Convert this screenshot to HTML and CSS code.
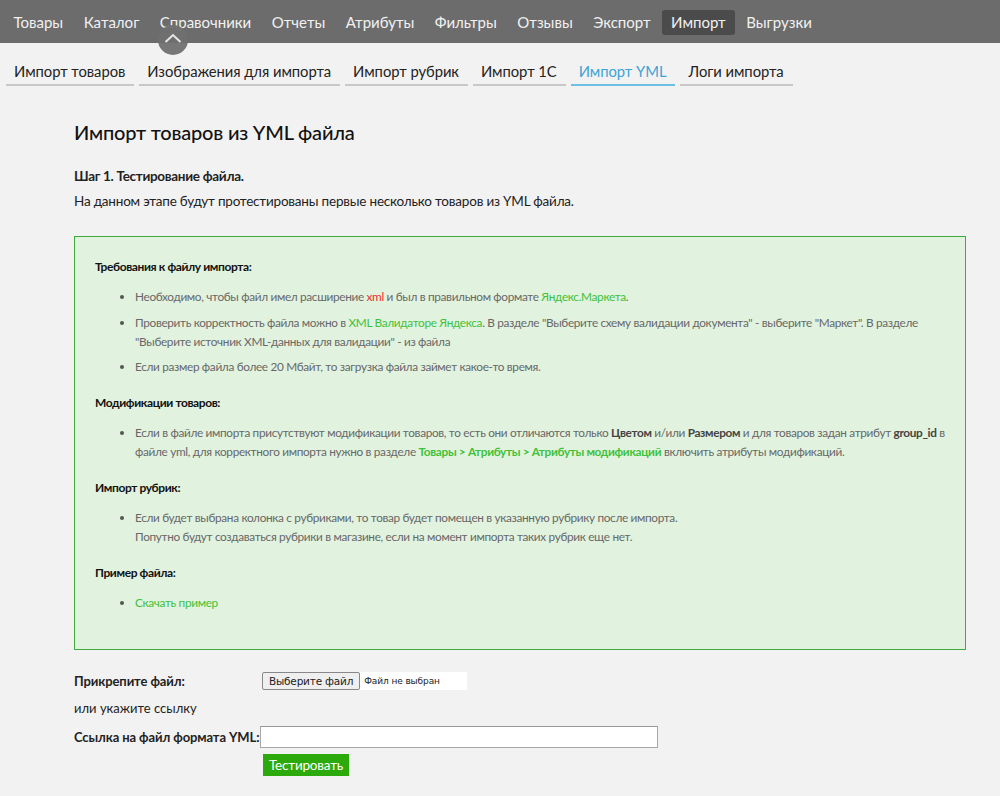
FILE: index.html
```html
<!DOCTYPE html>
<html lang="ru">
<head>
<meta charset="utf-8">
<title>Импорт YML</title>
<link rel="stylesheet" href="styles.css">
</head>
<body>
<header class="topnav">
  <nav class="menu">
    <a class="menu-item">Товары</a>
    <a class="menu-item">Каталог</a>
    <a class="menu-item">Справочники</a>
    <a class="menu-item">Отчеты</a>
    <a class="menu-item">Атрибуты</a>
    <a class="menu-item">Фильтры</a>
    <a class="menu-item">Отзывы</a>
    <a class="menu-item">Экспорт</a>
    <a class="menu-item active">Импорт</a>
    <a class="menu-item">Выгрузки</a>
  </nav>
  <span class="collapse-btn"><svg width="18" height="10" viewBox="0 0 18 10"><path d="M1.5 9 L9 2 L16.5 9" fill="none" stroke="#e6e6e6" stroke-width="2"/></svg></span>
</header>
<div class="tabs">
  <a class="tab">Импорт товаров</a>
  <a class="tab">Изображения для импорта</a>
  <a class="tab">Импорт рубрик</a>
  <a class="tab">Импорт 1С</a>
  <a class="tab active">Импорт YML</a>
  <a class="tab">Логи импорта</a>
</div>
<main class="content">
  <h1 class="title">Импорт товаров из YML файла</h1>
  <h3 class="step">Шаг 1. Тестирование файла.</h3>
  <p class="lead">На данном этапе будут протестированы первые несколько товаров из YML файла.</p>
  <section class="info">
    <h4 class="info-head">Требования к файлу импорта:</h4>
    <ul class="info-list">
      <li>Необходимо, чтобы файл имел расширение <span class="red">xml</span> и был в правильном формате <a class="link">Яндекс.Маркета</a>.</li>
      <li>Проверить корректность файла можно в <a class="link">XML Валидаторе Яндекса</a>. В разделе "Выберите схему валидации документа" - выберите "Маркет". В разделе "Выберите источник XML-данных для валидации" - из файла</li>
      <li>Если размер файла более 20 Мбайт, то загрузка файла займет какое-то время.</li>
    </ul>
    <h4 class="info-head">Модификации товаров:</h4>
    <ul class="info-list">
      <li>Если в файле импорта присутствуют модификации товаров, то есть они отличаются только <b>Цветом</b> и/или <b>Размером</b> и для товаров задан атрибут <b>group_id</b> в файле yml, для корректного импорта нужно в разделе <a class="link bold">Товары &gt; Атрибуты &gt; Атрибуты модификаций</a> включить атрибуты модификаций.</li>
    </ul>
    <h4 class="info-head">Импорт рубрик:</h4>
    <ul class="info-list">
      <li>Если будет выбрана колонка с рубриками, то товар будет помещен в указанную рубрику после импорта.<br>Попутно будут создаваться рубрики в магазине, если на момент импорта таких рубрик еще нет.</li>
    </ul>
    <h4 class="info-head">Пример файла:</h4>
    <ul class="info-list">
      <li><a class="link">Скачать пример</a></li>
    </ul>
  </section>
  <form class="form">
    <div class="row">
      <label class="label">Прикрепите файл:</label>
      <span class="file"><span class="file-btn">Выберите файл</span><span class="file-name">Файл не выбран</span></span>
    </div>
    <div class="or">или укажите ссылку</div>
    <div class="row row-url">
      <label class="label label-url">Ссылка на файл формата YML:</label>
      <input class="url" type="text">
    </div>
    <div class="row-btn">
      <button class="submit" type="button">Тестировать</button>
    </div>
  </form>
</main>
</body>
</html>
```
FILE: styles.css
```css
* { box-sizing: border-box; }
html, body { margin: 0; padding: 0; }
body {
  background: #f3f2f2;
  font-family: Lato, "Noto Sans", sans-serif;
  color: #222;
  width: 1000px;
  height: 796px;
  overflow: hidden;
}
.topnav {
  position: relative;
  background: #6c6c6c;
  height: 43px;
  padding: 10px 0 0 4px;
}
.menu { display: flex; gap: 1.5px; }
.menu-item {
  color: #f1f1f1;
  font-size: 15px;
  line-height: 25px;
  padding: 0 9.5px;
  border-radius: 3px;
}
.menu-item.active { background: #4b4b4b; }
.collapse-btn {
  position: absolute;
  left: 158px;
  top: 25px;
  width: 30px;
  height: 30px;
  border-radius: 50%;
  background: rgba(112,112,112,0.95);
  display: flex;
  align-items: center;
  justify-content: center;
  padding-bottom: 4px;
}
.tabs {
  display: flex;
  gap: 5px;
  padding: 17px 0 0 6px;
}
.tab {
  font-size: 14.8px;
  letter-spacing: -0.05px;
  color: #222;
  line-height: 22px;
  padding: 0 9px 2px 8px;
  border-bottom: 2px solid #c8c8c8;
}
.tab.active { color: #3ea3d6; border-bottom-color: #6ec0e6; }
.content { padding: 32px 34px 0 74px; }
.title {
  margin: 0;
  font-size: 20px;
  font-weight: 500;
  letter-spacing: -0.2px;
  line-height: 28px;
  color: #111;
}
.step {
  margin: 20px 0 0;
  font-size: 13.5px;
  font-weight: 700;
  letter-spacing: -0.3px;
  line-height: 20px;
}
.lead {
  margin: 5px 0 0;
  font-size: 13.5px;
  letter-spacing: -0.2px;
  line-height: 20px;
  color: #222;
}
.info {
  margin-top: 25px;
  border: 1px solid #3faa3f;
  background: #e1f2df;
  padding: 20px 14px 6px 20px;
  height: 414px;
}
.info-head {
  margin: 0;
  font-size: 12px;
  font-weight: 700;
  letter-spacing: -0.4px;
  line-height: 19px;
  color: #111;
}
.info-list {
  margin: 11px 0 17px;
  padding-left: 40px;
  font-size: 11.8px;
  letter-spacing: -0.33px;
  line-height: 19px;
  color: #686868;
}
.info-list li { margin-bottom: 6.5px; }
.info-list li::marker { color: #555; }
.info-list b { color: #444; }
.red { color: #f02a2a; }
.link { color: #3fc13a; }
.link.bold { font-weight: 700; }
.form { margin-top: 21px; }
.row { display: flex; align-items: center; }
.label {
  font-size: 13px;
  font-weight: 700;
  letter-spacing: -0.1px;
  width: 188px;
  line-height: 20px;
}
.file { display: flex; align-items: center; font-family: "DejaVu Sans", sans-serif; }
.file-btn {
  font-size: 10.5px;
  letter-spacing: -0.2px;
  padding: 0 6px;
  border: 1px solid #888;
  border-radius: 2px;
  background: #efefef;
  line-height: 16px;
}
.file-name {
  font-size: 9px;
  letter-spacing: -0.1px;
  background: #fff;
  padding: 2px 4px;
  width: 107px;
  line-height: 14px;
}
.or { font-size: 13px; margin-top: 7px; line-height: 20px; color: #222; }
.row-url { margin-top: 8px; }
.label-url { width: auto; }
.url {
  width: 398px;
  height: 22px;
  border: 1px solid #a7a7a7;
  border-top-color: #999;
  background: #fff;
  margin-left: 1px;
  padding: 0;
}
.row-btn { padding-left: 189px; margin-top: 6px; }
.submit {
  background: #2daa0b;
  color: #fff;
  border: none;
  font-family: Lato, sans-serif;
  font-size: 13.5px;
  letter-spacing: -0.2px;
  height: 22px;
  padding: 0 6px;
}
```
